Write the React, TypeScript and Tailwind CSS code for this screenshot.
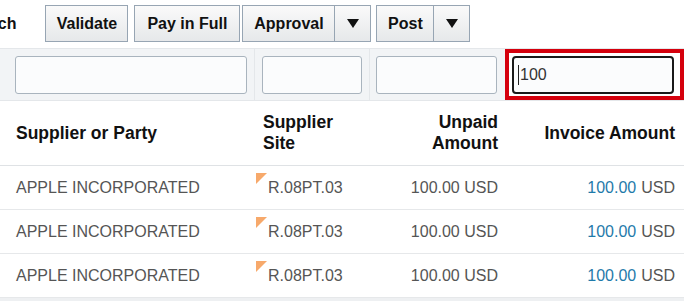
import React from "react";

const rows = [1, 2, 3];

function Btn({ label, w, menu }: { label: string; w: string; menu?: boolean }) {
    return (
        <div className={`flex h-[37px] items-stretch border border-[#97a5b3] bg-gradient-to-b from-[#fafafa] to-[#e6e8ea] text-[16px] font-bold text-[#111] ${w}`}>
            <span className="flex flex-1 items-center justify-center">{label}</span>
            {menu && (
                <span className="flex w-[36px] items-center justify-center border-l border-[#97a5b3]">
                    <svg width="12" height="9" viewBox="0 0 12 9">
                        <path d="M0 0 H12 L6 9 Z" fill="#111" />
                    </svg>
                </span>
            )}
        </div>
    );
}

function Flag() {
    return (
        <svg width="11" height="11" viewBox="0 0 11 11" className="absolute left-[1px] top-[7px]">
            <path d="M0 0 H11 L0 11 Z" fill="#f7a96b" />
        </svg>
    );
}

export default function App() {
    return (
        <div className="h-[301px] w-[684px] overflow-hidden bg-white font-['Liberation_Sans',Arial,sans-serif]">
            <div className="flex h-[48px] items-center pb-[1px]">
                <span className="-ml-[28px] mr-[29px] text-[16px] font-bold text-[#111]">Batch</span>
                <Btn label="Validate" w="w-[83px]" />
                <div className="ml-[6px]">
                    <Btn label="Pay in Full" w="w-[106px]" />
                </div>
                <div className="ml-[2px]">
                    <Btn label="Approval" w="w-[129px]" menu />
                </div>
                <div className="ml-[5px]">
                    <Btn label="Post" w="w-[94px]" menu />
                </div>
            </div>

            <div className="grid h-[53px] grid-cols-[255px_115px_135px_179px] border-y border-[#e4e7ea] bg-[#f2f4f6]">
                <div className="flex items-center border-r border-[#e4e7ea] pl-[15px] pr-[7px]">
                    <input className="h-[38px] w-full rounded-[3px] border border-[#a9b4be] bg-[#fbfcfd] outline-none" />
                </div>
                <div className="flex items-center border-r border-[#e4e7ea] pl-[7px] pr-[7px]">
                    <input className="h-[38px] w-full rounded-[3px] border border-[#a9b4be] bg-[#fbfcfd] outline-none" />
                </div>
                <div className="flex items-center pl-[6px] pr-[8px]">
                    <input className="h-[38px] w-full rounded-[3px] border border-[#a9b4be] bg-[#fbfcfd] outline-none" />
                </div>
                <div className="flex items-center border-[4px] border-[#d5000d] bg-white pl-[3px] pr-[6px]">
                    <div className="flex h-[38px] w-full items-center rounded-[4px] border-2 border-[#1a1a1a] bg-[#fbfcfd] pl-[4px] text-[16px] text-[#333]">
                        <span className="mr-[1px] inline-block h-[20px] w-px bg-[#222]" />
                        100
                    </div>
                </div>
            </div>

            <div className="grid h-[65px] grid-cols-[255px_115px_135px_179px] border-b border-[#dfe2e5] text-[17.5px] font-bold leading-[21px] text-[#111]">
                <div className="flex items-center pl-[16px]">Supplier or Party</div>
                <div className="flex items-center pl-[8px]">
                    Supplier
                    <br />
                    Site
                </div>
                <div className="flex items-center justify-end pr-[7px] text-right">
                    Unpaid
                    <br />
                    Amount
                </div>
                <div className="flex items-center justify-end pr-[9px]">Invoice Amount</div>
            </div>

            {rows.map((r) => (
                <div
                    key={r}
                    className="grid h-[44px] grid-cols-[255px_115px_135px_179px] border-b border-[#e6e8ea] text-[16px] text-[#555]"
                >
                    <div className="flex items-center pl-[16px]">APPLE INCORPORATED</div>
                    <div className="relative flex items-center pl-[13px]">
                        <Flag />
                        R.08PT.03
                    </div>
                    <div className="flex items-center justify-end pr-[7px]">100.00 USD</div>
                    <div className="flex items-center justify-end pr-[9px]">
                        <span className="mr-[5px] text-[#1f7aaa]">100.00</span>USD
                    </div>
                </div>
            ))}
            <div className="h-[10px] bg-[#eef0f2]" />
        </div>
    );
}
